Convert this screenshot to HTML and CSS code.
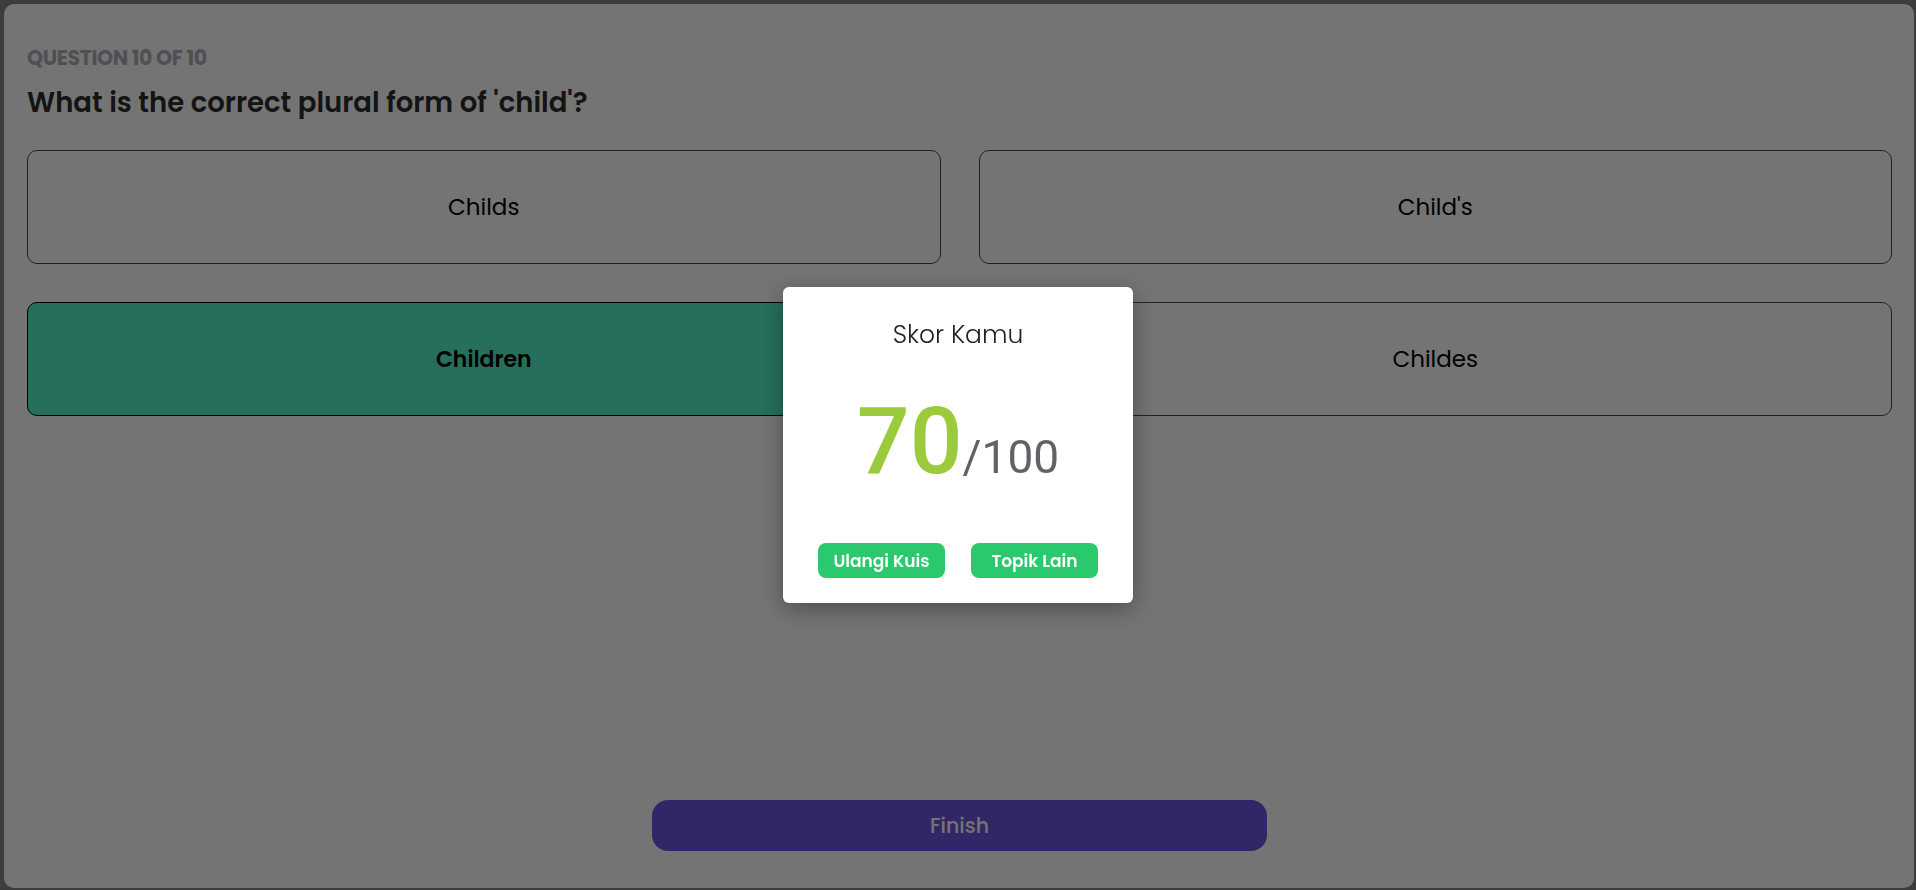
FILE: index.html
```html
<!DOCTYPE html>
<html lang="id">
<head>
<meta charset="utf-8">
<title>Quiz</title>
<link rel="stylesheet" href="styles.css">
</head>
<body>
  <main class="quiz">
    <p class="quiz-label">Question 10 of 10</p>
    <h1 class="quiz-question">What is the correct plural form of 'child'?</h1>
    <div class="options">
      <button class="option">Childs</button>
      <button class="option">Child's</button>
      <button class="option option-selected">Children</button>
      <button class="option">Childes</button>
    </div>
    <button class="finish">Finish</button>
  </main>

  <div class="overlay">
    <section class="modal">
      <h2 class="modal-title">Skor Kamu</h2>
      <div class="score"><span class="score-value">70</span><span class="score-total">/100</span></div>
      <div class="modal-actions">
        <button class="pill">Ulangi Kuis</button>
        <button class="pill">Topik Lain</button>
      </div>
    </section>
  </div>
</body>
</html>
```

FILE: styles.css
```css
* { box-sizing: border-box; }

html, body { height: 100%; }

body {
  margin: 0;
  padding: 4px 2px 2px 4px;
  background: #868686;
  font-family: "Poppins", "Inter", "Noto Sans", sans-serif;
}

.quiz {
  height: 100%;
  background: #ffffff;
  border-radius: 10px;
  padding: 39px 22px 37px 23px;
  display: flex;
  flex-direction: column;
}

.quiz-label {
  margin: 0;
  font-size: 20.5px;
  line-height: 30px;
  font-weight: 700;
  text-transform: uppercase;
  color: #adadb9;
  letter-spacing: -0.4px;
}

.quiz-question {
  margin: 12px 0 0;
  font-size: 27.5px;
  line-height: 36px;
  font-weight: 600;
  color: #2c2c2c;
}

.options {
  margin-top: 29px;
  display: grid;
  grid-template-columns: 1fr 1fr;
  grid-auto-rows: 114px;
  gap: 38px;
}

.option {
  font: inherit;
  font-size: 23px;
  color: #000;
  background: #fff;
  border: 1px solid #4a4a4a;
  border-radius: 10px;
  cursor: pointer;
}

.option-selected {
  background: #52f4ca;
  border-color: #000;
  font-weight: 600;
  font-size: 22px;
}

.finish {
  margin-top: auto;
  align-self: center;
  width: 615px;
  height: 51px;
  border: none;
  border-radius: 16px;
  background: #6c56e0;
  color: #fff;
  font: inherit;
  font-size: 20.5px;
  font-weight: 500;
}

.overlay {
  position: fixed;
  inset: 0;
  background: rgba(0, 0, 0, 0.545);
  display: flex;
  align-items: center;
  justify-content: center;
}

.modal {
  width: 350px;
  background: #fff;
  border-radius: 6px;
  padding: 32px 24px 25px;
  box-shadow: 0 6px 24px rgba(0, 0, 0, 0.35);
  display: flex;
  flex-direction: column;
  align-items: center;
}

.modal-title {
  margin: 0;
  font-size: 25px;
  line-height: 32px;
  font-weight: 300;
  color: #222;
}

.score {
  margin-top: 46px;
  font-family: "Roboto", sans-serif;
  line-height: 90px;
  white-space: nowrap;
}

.score-value {
  font-size: 93px;
  font-weight: 500;
  color: #9acb3c;
}

.score-total {
  font-size: 46px;
  color: #616169;
}

.modal-actions {
  margin-top: 30px;
  display: flex;
  gap: 26px;
}

.pill {
  width: 127px;
  height: 35px;
  border: none;
  border-radius: 8px;
  background: #2ac96e;
  color: #fff;
  font: inherit;
  font-size: 17px;
  font-weight: 600;
}
```
